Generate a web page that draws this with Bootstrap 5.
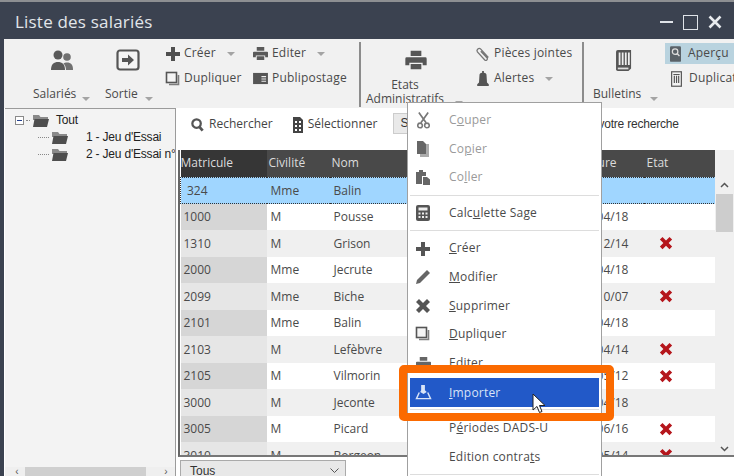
<!DOCTYPE html>
<html lang="fr">
<head>
<meta charset="utf-8">
<title>Liste des salariés</title>
<link href="https://cdn.jsdelivr.net/npm/bootstrap@5.3.0/dist/css/bootstrap.min.css" rel="stylesheet">
<style>
html,body{margin:0;width:734px;height:476px;overflow:hidden;background:#3b4250;}
body{font-family:"Open Sans","Noto Sans",sans-serif;font-size:12px;color:#444;line-height:1.2;}
.win{position:relative;width:734px;height:476px;overflow:hidden;border-top:2px solid #8d8f92;}
.ttl{height:37px;background:#3b4250;color:#e2e6ea;padding-left:15px;}
.ttl-text{font-size:17px;line-height:1;letter-spacing:.2px;padding-top:1px;}
.wbtns{gap:10px;padding-right:12px;padding-top:3px;}
.wbody{margin-left:4px;height:437px;background:#fff;}
.rib{height:69px;background:#f1f1f1;flex:none;}
.lgbtn{height:69px;flex:none;}
.lgico{height:40px;padding-top:10px;}
.lglab{white-space:nowrap;color:#4a4a4a;}
.l-sal{width:78px;padding-left:29px;}
.l-sal .lgico{margin-left:17px;}
.l-sor{width:52px;padding-left:12px;}
.l-sor .lgico{margin-left:11px;}
.l-eta{width:94px;padding-left:5px;}
.l-eta .lgico{margin-left:38px;margin-bottom:-1px;}
.l-eta .lglab{width:78px;}
.l-bul{width:66px;padding-left:9px;}
.l-bul .lgico{margin-left:22px;}
.tri{display:inline-block;width:0;height:0;border:4px solid transparent;border-top:4px solid #a4a4a4;border-bottom:0;}
.tribox{flex:none;padding-bottom:7px;}
.rsep{width:2px;height:65px;background:#8c8c8c;margin-top:3px;flex:none;}
.smcol{padding-top:4px;flex:none;}
.smbtn{height:21px;margin-bottom:4px;gap:3px;white-space:nowrap;color:#4a4a4a;letter-spacing:.2px;}
.smbtn.on{background:#b9d3df;padding-left:5px;}
.smbtn.off{padding-left:6px;}
.lower{height:368px;}
.treep{width:171px;margin-left:1px;background:#f3f3f3;border-top:1px solid #9b9b9b;border-right:1px solid #9b9b9b;font-family:"Liberation Sans",sans-serif;color:#222;flex:none;}
.trow{height:17px;white-space:nowrap;letter-spacing:-.2px;}
.trow>*{flex:none;}
.tr0{margin-top:3px;padding-left:10px;gap:2px;}
.trc{padding-left:33px;gap:2px;}
.trc .tlab{margin-left:15px;}
.tr0 .tlab{margin-left:4px;}
.tdot{border-top:1px dotted #888;}
.hbar{height:9px;background:#efefef;overflow:hidden;}
.hthumb{width:121px;height:9px;background:#cfcfcf;flex:none;}
.arr{font-size:10px;line-height:9px;color:#555;width:20px;padding-left:4px;text-align:center;flex:none;}
.arr.rgt{width:26px;padding-left:14px;}
.mainp{width:556px;margin-left:2px;flex:none;}
.stb{height:42px;background:#fff;padding:5px 0 0 12px;flex:none;white-space:nowrap;}
.stb-sel{margin-left:19px;}
.fakeinput{margin-left:16px;width:150px;height:21px;border:1px solid #ccc;background:#e9e9e9;padding-left:6px;line-height:19px;font-family:"Liberation Sans",sans-serif;color:#333;flex:none;}
.stb-hint{margin-left:55px;font-family:"Liberation Sans",sans-serif;color:#333;letter-spacing:-.2px;}
.gridw{height:307px;border-left:2px solid #666;border-bottom:2px solid #777;overflow:hidden;flex:none;}
.tbw{width:535px;flex:none;overflow:hidden;}
table.sal{table-layout:fixed;width:535px;margin:0;border-collapse:collapse;}
table.sal th,table.sal td{padding:1px 0 0 4px;border:0;box-shadow:none;font-weight:400;white-space:nowrap;color:#4a4a4a;vertical-align:middle;background:transparent;font-size:12px;}
table.sal thead th{height:27px;background:#494949;color:#dcdcdc;padding:0 0 0 2px;}
table.sal thead th.c1{background:#363636;padding-left:0;}
table.sal thead th.c5{padding-left:3px;}
table.sal tbody tr{height:26.5px;}
table.sal tbody tr td{background:#fff;}
table.sal tbody tr td.c1{background:#d6d6d6;padding-left:3px;}
table.sal tbody tr:nth-child(odd) td{background:#f0f0f0;}
table.sal tbody tr:nth-child(odd) td.c1{background:#e6e6e6;}
table.sal tbody tr.sel td,table.sal tbody tr.sel td.c1{background:#a0d6ff;border-top:1px dotted #333;border-bottom:1px dotted #333;}
table.sal tbody tr.sel td.c1{padding-left:6px;border-left:1px dotted #333;}
table.sal td.c4{padding-left:5px;}
.redx{width:14px;height:14px;color:#b5161c;margin-left:11px;display:block;margin-top:-1px;}
.vbar{width:19px;background:#f0f0f0;padding-top:27px;flex:none;}
.vup{height:17px;text-align:center;}
.vth{height:38px;background:#cdcdcd;margin:0 1px;}
.ftr{height:19px;background:#fff;padding:3px 0 0 2px;flex:none;}
.fsel{width:166px;height:20px;border:1px solid #aaa;background:#e8e8e8;padding:2px 6px 0 9px;font-family:"Liberation Sans",sans-serif;color:#333;}
.ctxm{position:absolute;left:407px;top:100px;width:195px;height:380px;margin:0;padding:3px 2px 0;border:1px solid #a0a0a0;background:#fff;z-index:5;font-size:12px;}
.mit{height:28.6px;color:#4a4a4a;white-space:nowrap;letter-spacing:.2px;}
.mit .mic{width:26px;display:flex;justify-content:center;flex:none;}
.mit .mtx{margin-left:13px;}
.mit.dis{color:#9a9a9a;}
.mit.act{background:#2259c8;color:#d9e4f7;height:29px;margin-top:1px;}
.msep{height:0;border-top:1.5px solid #ddd;margin:3px 0;}
.msep.low{margin:1.5px 0 4px;}
.orbox{position:absolute;left:399px;top:363px;width:215px;height:56px;border:8px solid #fb6a00;border-radius:5px;z-index:6;}
.curs{position:absolute;left:532px;top:391px;z-index:7;}
</style>
</head>
<body>
<svg width="0" height="0" class="position-absolute">
<defs>
<symbol id="i-plus" viewBox="0 0 16 16"><path fill="currentColor" d="M6 1h4v5h5v4h-5v5H6v-5H1V6h5z"/></symbol>
<symbol id="i-print" viewBox="0 0 18 16"><path fill="currentColor" d="M5 1h8v4H5zM2 6h14a1 1 0 0 1 1 1v5h-3v-2H4v2H1V7a1 1 0 0 1 1-1zM5 11h8v4H5z"/></symbol>
<symbol id="i-dup" viewBox="0 0 16 16"><rect x="1.5" y="1.5" width="10" height="10" fill="#f4f4f4" stroke="currentColor" stroke-width="1.6"/><path fill="none" stroke="currentColor" stroke-width="1.6" opacity=".75" d="M13.5 4v9.5H4"/></symbol>
<symbol id="i-pub" viewBox="0 0 18 14"><path fill="currentColor" d="M1 1h16v12H1z"/><path stroke="#eee" stroke-width="1.2" d="M10 5h5M10 7.5h5M10 10h5"/></symbol>
<symbol id="i-people" viewBox="0 0 24 24"><circle cx="8" cy="6" r="4.5" fill="currentColor"/><path fill="currentColor" d="M1 21c0-6 3-8 7-8s7 2 7 8z"/><circle cx="17" cy="8" r="3.8" fill="currentColor" opacity=".85"/><path fill="currentColor" opacity=".85" d="M16 21c0-3-1-5-2.500-6.500 1-.8 2-1 3.500-1 4 0 6 2 6 7.500z"/></symbol>
<symbol id="i-exit" viewBox="0 0 24 22"><rect x="1.500" y="1.500" width="21" height="19" rx="2.500" fill="#f4f4f4" stroke="currentColor" stroke-width="2.200"/><path fill="currentColor" d="M6 9h6V5.500l6 5.500-6 5.500V13H6z"/></symbol>
<symbol id="i-clip" viewBox="0 0 18 18"><path fill="none" stroke="currentColor" stroke-width="1.500" d="M15 13 6.500 3.500a2.500 2.500 0 0 0-3.800 3.200l8.300 9a1.800 1.800 0 0 0 2.700-2.300L6.500 6"/></symbol>
<symbol id="i-bell" viewBox="0 0 16 18"><path fill="currentColor" d="M7 0h2v2a3 3 0 0 1 3 3l.5 8 2 2v2H1.500v-2l2-2L4 5a3 3 0 0 1 3-3z"/></symbol>
<symbol id="i-book" viewBox="0 0 20 26"><path fill="currentColor" d="M3 1h15v21l-3 3H3a2 2 0 0 1-2-2V3a2 2 0 0 1 2-2z"/><path fill="#eee" d="M4 4h2v14H4zM7.500 4h2v14h-2zM11 4h2v14h-2zM14.500 4h2v14h-2z"/><path fill="#ddd" d="M3 21h12v2H3z"/></symbol>
<symbol id="i-prev" viewBox="0 0 14 20"><rect x="0" y="0" width="14" height="20" rx="1.500" fill="currentColor"/><circle cx="6.500" cy="7" r="3.500" fill="none" stroke="#ddd" stroke-width="1.600"/><path stroke="#ddd" stroke-width="1.800" d="m9 9.500 3 3"/></symbol>
<symbol id="i-dupb" viewBox="0 0 14 20"><rect x=".8" y=".8" width="12.400" height="18.400" fill="#f2f2f2" stroke="currentColor" stroke-width="1.500"/><path fill="currentColor" d="M3 3.500h8V5H3zM3.500 6h1.500v9H3.500zM6.300 6h1.500v9H6.300zM9 6h1.500v9H9z"/></symbol>
<symbol id="i-search" viewBox="0 0 16 16"><circle cx="7" cy="6.500" r="4.500" fill="none" stroke="currentColor" stroke-width="2.400"/><path stroke="currentColor" stroke-width="3" d="m10 10 3.500 4"/></symbol>
<symbol id="i-selc" viewBox="0 0 12 16"><path fill="currentColor" d="M1 0h7l3 3v13H1z"/><path fill="#fff" d="M3 4h2v2H3zM7 4h2v2H7zM3 8h2v2H3zM7 8h2v2H7zM3 12h2v2H3zM7 12h2v2H7z"/></symbol>
<symbol id="i-sciss" viewBox="0 0 14 18"><path fill="none" stroke="currentColor" stroke-width="1.800" d="M2 0.500 9.800 11.500M12 0.500 4.200 11.500"/><circle cx="3.300" cy="14.300" r="2.500" fill="none" stroke="currentColor" stroke-width="1.700"/><circle cx="10.700" cy="14.300" r="2.500" fill="none" stroke="currentColor" stroke-width="1.700"/></symbol>
<symbol id="i-copy" viewBox="0 0 14 16"><path fill="currentColor" opacity=".55" d="M4 3h9v13H4z"/><path fill="currentColor" d="M1 0h6l3 3v10H1z"/></symbol>
<symbol id="i-paste" viewBox="0 0 16 16"><path fill="currentColor" d="M1 3h3V1h4v2h3v4H7v8H1z"/><path fill="currentColor" d="M8 8h4l3 2.500V16H8z"/></symbol>
<symbol id="i-calc" viewBox="0 0 14 16"><rect x="0" y="0" width="14" height="16" rx="2" fill="currentColor"/><path fill="#eee" d="M2.500 2.500h9v3h-9zM2.500 7.500h2v2h-2zM6 7.500h2v2H6zM9.500 7.500h2v2h-2zM2.500 11h2v2h-2zM6 11h2v2H6zM9.500 11h2v2h-2z"/></symbol>
<symbol id="i-pen" viewBox="0 0 16 16"><path fill="currentColor" d="M12 1l3 3L5 14 1 15l1-4z"/></symbol>
<symbol id="i-x" viewBox="0 0 16 16"><path fill="currentColor" d="M4 1 8 5l4-4 3 3-4 4 4 4-3 3-4-4-4 4-3-3 4-4-4-4z"/></symbol>
<symbol id="i-imp" viewBox="0 0 18 16"><path fill="currentColor" d="M6.500 0h4v5.500l2 2-3.500 2-3.500-2 1-2z"/><path fill="none" stroke="currentColor" stroke-width="1.500" d="M4.500 8 1.500 14.500h15L13.500 8"/></symbol>
<symbol id="i-fold" viewBox="0 0 18 13"><path fill="#8a8a8a" d="M1 1h6l1.500 2H16v3H1z"/><path fill="#4e4e4e" d="M2.500 5H17l-2 8H1z"/></symbol>
</defs>
</svg>

<div class="win">
  <div class="ttl d-flex justify-content-between align-items-center">
    <div class="ttl-text">Liste des salariés</div>
    <div class="wbtns d-flex align-items-center">
      <svg width="13" height="16" viewBox="0 0 13 16"><rect y="7" width="13" height="2" fill="#dfe3e8"/></svg>
      <svg width="15" height="15" viewBox="0 0 15 15"><rect x=".5" y=".5" width="14" height="14" fill="none" stroke="#dfe3e8"/></svg>
      <svg width="14" height="14" viewBox="0 0 14 14"><path d="M1.500 1.500 12.500 12.500M12.500 1.500 1.500 12.500" stroke="#e8ebee" stroke-width="2.600"/></svg>
    </div>
  </div>

  <div class="wbody d-flex flex-column">
    <div class="rib d-flex">
      <div class="lgbtn l-sal">
        <div class="lgico"><svg width="24" height="24" style="color:#5a5a5a"><use href="#i-people"/></svg></div>
        <div class="lglab mt-2">Salariés</div>
      </div>
      <div class="tribox d-flex align-items-end" style="width:11px"><span class="tri"></span></div>
      <div class="lgbtn l-sor">
        <div class="lgico"><svg width="24" height="22" style="color:#555"><use href="#i-exit"/></svg></div>
        <div class="lglab mt-2">Sortie</div>
      </div>
      <div class="tribox d-flex align-items-end" style="width:20px"><span class="tri"></span></div>
      <div class="smcol" style="width:87px">
        <div class="smbtn d-flex align-items-center"><svg width="16" height="16" style="color:#4f4f4f"><use href="#i-plus"/></svg><span>Créer</span><span class="tri ms-2"></span></div>
        <div class="smbtn d-flex align-items-center"><svg width="16" height="16" style="color:#555"><use href="#i-dup"/></svg><span>Dupliquer</span></div>
      </div>
      <div class="smcol" style="width:107px">
        <div class="smbtn d-flex align-items-center"><svg width="17" height="15" style="color:#5a5a5a"><use href="#i-print"/></svg><span>Editer</span><span class="tri ms-2"></span></div>
        <div class="smbtn d-flex align-items-center"><svg width="17" height="13" style="color:#555"><use href="#i-pub"/></svg><span>Publipostage</span></div>
      </div>
      <div class="rsep"></div>
      <div class="lgbtn l-eta">
        <div class="lgico"><svg width="24" height="22" style="color:#555"><use href="#i-print"/></svg></div>
        <div class="lglab text-center">Etats<br>Administratifs</div>
      </div>
      <div class="tribox d-flex align-items-end" style="width:20px;padding-bottom:3px"><span class="tri"></span></div>
      <div class="smcol" style="width:107px">
        <div class="smbtn d-flex align-items-center"><svg width="16" height="16" style="color:#777"><use href="#i-clip"/></svg><span>Pièces jointes</span></div>
        <div class="smbtn d-flex align-items-center"><svg width="16" height="16" style="color:#555"><use href="#i-bell"/></svg><span>Alertes</span><span class="tri ms-2"></span></div>
      </div>
      <div class="rsep"></div>
      <div class="lgbtn l-bul">
        <div class="lgico"><svg width="18" height="23" style="color:#555"><use href="#i-book"/></svg></div>
        <div class="lglab mt-2">Bulletins</div>
      </div>
      <div class="tribox d-flex align-items-end" style="width:15px"><span class="tri"></span></div>
      <div class="smcol flex-grow-1 overflow-hidden">
        <div class="smbtn on d-flex align-items-center"><svg width="11" height="16" style="color:#5a6268"><use href="#i-prev"/></svg><span class="ms-1">Aperçu</span></div>
        <div class="smbtn off d-flex align-items-center"><svg width="11" height="16" style="color:#555"><use href="#i-dupb"/></svg><span class="ms-1">Duplicat</span></div>
      </div>
    </div>

    <div class="lower d-flex">
      <div class="treep d-flex flex-column">
        <div class="trow tr0 d-flex align-items-center">
          <svg width="9" height="9" viewBox="0 0 9 9"><rect x=".5" y=".5" width="8" height="8" fill="#fff" stroke="#8a8a8a"/><path d="M2 4.500h5" stroke="#23408f"/></svg>
          <span class="tdot" style="width:4px"></span>
          <svg width="18" height="13"><use href="#i-fold"/></svg>
          <span class="tlab">Tout</span>
        </div>
        <div class="trow trc d-flex align-items-center">
          <span class="tdot" style="width:11px"></span>
          <svg width="18" height="13"><use href="#i-fold"/></svg>
          <span class="tlab">1 - Jeu d'Essai</span>
        </div>
        <div class="trow trc d-flex align-items-center overflow-hidden">
          <span class="tdot" style="width:11px"></span>
          <svg width="18" height="13"><use href="#i-fold"/></svg>
          <span class="tlab">2 - Jeu d'Essai n°2</span>
        </div>
        <div class="hbar d-flex align-items-center mt-auto">
          <span class="arr">‹</span><span class="hthumb"></span><span class="arr rgt">›</span>
        </div>
      </div>

      <div class="mainp d-flex flex-column">
        <div class="stb d-flex align-items-start">
          <svg width="15" height="16" class="mt-1" style="color:#555"><use href="#i-search"/></svg>
          <span class="ms-1 mt-1">Rechercher</span>
          <svg class="stb-sel mt-1" width="12" height="16" style="color:#444"><use href="#i-selc"/></svg>
          <span class="ms-1 mt-1">Sélectionner</span>
          <div class="fakeinput">S</div>
          <span class="stb-hint mt-1">votre recherche</span>
        </div>
        <div class="gridw d-flex">
          <div class="tbw">
            <table class="table sal">
              <colgroup><col style="width:86px"><col style="width:63px"><col style="width:244px"><col style="width:70px"><col style="width:72px"></colgroup>
              <thead><tr><th class="c1">Matricule</th><th>Civilité</th><th>Nom</th><th>Clôture</th><th class="c5">Etat</th></tr></thead>
              <tbody>
                <tr class="sel"><td class="c1">324</td><td>Mme</td><td>Balin</td><td></td><td></td></tr>
                <tr><td class="c1">1000</td><td>M</td><td>Pousse</td><td class="c4">01/04/18</td><td></td></tr>
                <tr><td class="c1">1310</td><td>M</td><td>Grison</td><td class="c4">01/12/14</td><td><svg class="redx"><use href="#i-x"/></svg></td></tr>
                <tr><td class="c1">2000</td><td>Mme</td><td>Jecrute</td><td class="c4">01/04/18</td><td></td></tr>
                <tr><td class="c1">2099</td><td>Mme</td><td>Biche</td><td class="c4">01/10/07</td><td><svg class="redx"><use href="#i-x"/></svg></td></tr>
                <tr><td class="c1">2101</td><td>Mme</td><td>Balin</td><td class="c4">01/04/18</td><td></td></tr>
                <tr><td class="c1">2103</td><td>M</td><td>Lefèbvre</td><td class="c4">01/04/14</td><td><svg class="redx"><use href="#i-x"/></svg></td></tr>
                <tr><td class="c1">2105</td><td>M</td><td>Vilmorin</td><td class="c4">01/05/12</td><td><svg class="redx"><use href="#i-x"/></svg></td></tr>
                <tr><td class="c1">3000</td><td>M</td><td>Jeconte</td><td class="c4">01/04/18</td><td></td></tr>
                <tr><td class="c1">3005</td><td>M</td><td>Picard</td><td class="c4">01/06/16</td><td><svg class="redx"><use href="#i-x"/></svg></td></tr>
                <tr><td class="c1">3010</td><td>M</td><td>Borgeon</td><td class="c4">01/05/14</td><td><svg class="redx"><use href="#i-x"/></svg></td></tr>
              </tbody>
            </table>
          </div>
          <div class="vbar d-flex flex-column">
            <div class="vup"><svg width="9" height="17" viewBox="0 0 9 17"><path d="m1 10 3.500-3.500L8 10" fill="none" stroke="#555" stroke-width="1.500"/></svg></div>
            <div class="vth"></div>
            <div class="vup mt-auto"><svg width="9" height="17" viewBox="0 0 9 17"><path d="m1 9 3.500 3.500L8 9" fill="none" stroke="#555" stroke-width="1.500"/></svg></div>
          </div>
        </div>
        <div class="ftr">
          <div class="fsel d-flex justify-content-between align-items-center"><span>Tous</span><svg width="9" height="6" viewBox="0 0 9 6"><path d="m.5.500 4 4 4-4" fill="none" stroke="#555"/></svg></div>
        </div>
      </div>
    </div>
  </div>

  <ul class="ctxm list-unstyled">
    <li class="mit dis d-flex align-items-center"><span class="mic"><svg width="13" height="17" style="color:#777"><use href="#i-sciss"/></svg></span><span class="mtx">C<u>o</u>uper</span></li>
    <li class="mit dis d-flex align-items-center"><span class="mic"><svg width="14" height="16" style="color:#666"><use href="#i-copy"/></svg></span><span class="mtx">Co<u>p</u>ier</span></li>
    <li class="mit dis d-flex align-items-center"><span class="mic"><svg width="16" height="16" style="color:#666"><use href="#i-paste"/></svg></span><span class="mtx">Co<u>l</u>ler</span></li>
    <li class="msep"></li>
    <li class="mit d-flex align-items-center"><span class="mic"><svg width="14" height="16" style="color:#555"><use href="#i-calc"/></svg></span><span class="mtx">Calc<u>u</u>lette Sage</span></li>
    <li class="msep"></li>
    <li class="mit d-flex align-items-center"><span class="mic"><svg width="16" height="16" style="color:#555"><use href="#i-plus"/></svg></span><span class="mtx"><u>C</u>réer</span></li>
    <li class="mit d-flex align-items-center"><span class="mic"><svg width="16" height="16" style="color:#666"><use href="#i-pen"/></svg></span><span class="mtx"><u>M</u>odifier</span></li>
    <li class="mit d-flex align-items-center"><span class="mic"><svg width="16" height="16" style="color:#555"><use href="#i-x"/></svg></span><span class="mtx"><u>S</u>upprimer</span></li>
    <li class="mit d-flex align-items-center"><span class="mic"><svg width="16" height="16" style="color:#555"><use href="#i-dup"/></svg></span><span class="mtx"><u>D</u>upliquer</span></li>
    <li class="mit d-flex align-items-center"><span class="mic"><svg width="17" height="15" style="color:#666"><use href="#i-print"/></svg></span><span class="mtx"><u>E</u>diter</span></li>
    <li class="mit act d-flex align-items-center"><span class="mic"><svg width="17" height="15" style="color:#d9e4f7"><use href="#i-imp"/></svg></span><span class="mtx"><u>I</u>mporter</span></li>
    <li class="msep low"></li>
    <li class="mit d-flex align-items-center"><span class="mic"></span><span class="mtx">P<u>é</u>riodes DADS-U</span></li>
    <li class="mit d-flex align-items-center"><span class="mic"></span><span class="mtx">Edition contra<u>t</u>s</span></li>
    <li class="msep"></li>
  </ul>
  <div class="orbox"></div>
  <svg class="curs" width="14" height="22" viewBox="0 0 14 22"><path d="M1 1v16l4-3.500 2.500 6 2.500-1-2.500-6H13z" fill="#fff" stroke="#222" stroke-width="1"/></svg>
</div>
</body>
</html>
